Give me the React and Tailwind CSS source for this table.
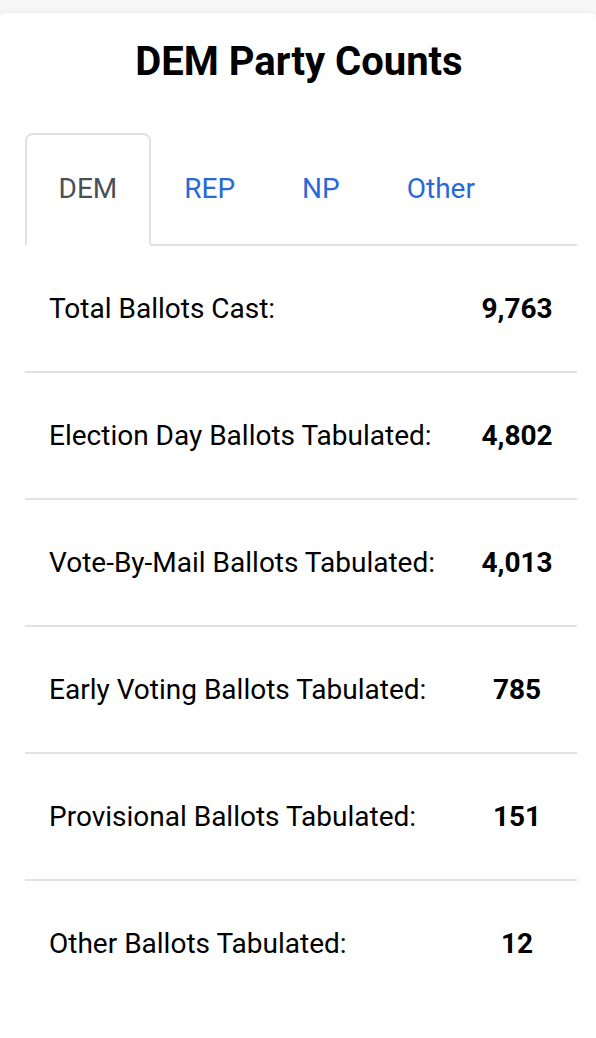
import React from 'react'

const tabs = ['DEM', 'REP', 'NP', 'Other']

const rows = [
  { label: 'Total Ballots Cast:', value: '9,763' },
  { label: 'Election Day Ballots Tabulated:', value: '4,802' },
  { label: 'Vote-By-Mail Ballots Tabulated:', value: '4,013' },
  { label: 'Early Voting Ballots Tabulated:', value: '785' },
  { label: 'Provisional Ballots Tabulated:', value: '151' },
  { label: 'Other Ballots Tabulated:', value: '12' },
]

const App = () => {
  return (
    <div className="min-h-screen bg-[#f7f7f7] pt-[13px] font-['Roboto',sans-serif]">
      <div className="min-h-[1025px] bg-white rounded-t-[6px] shadow-[0_-2px_6px_rgba(0,0,0,0.04)] pt-[25px]">
        <h1 className="text-center text-[40px] leading-[48px] font-bold text-black pl-[2px]">
          DEM Party Counts
        </h1>

        <div className="ml-[25px] mr-[19px] mt-[47px]">
          {/* tabs */}
          <div className="flex border-b-2 border-[#dee2e6]">
            {tabs.map((t, i) => (
              <div
                key={t}
                className={
                  i === 0
                    ? 'px-[31.5px] pt-[33px] pb-[34px] text-[28px] leading-[42px] text-[#495057] bg-white border-2 border-[#dee2e6] border-b-white rounded-t-[8px] -mb-[2px]'
                    : 'px-[31.5px] pt-[33px] pb-[34px] text-[28px] leading-[42px] text-[#2869d9] border-2 border-transparent -mb-[2px]'
                }
              >
                {t}
              </div>
            ))}
          </div>

          {/* counts */}
          <div>
            {rows.map((r, i) => (
              <div
                key={r.label}
                className={
                  'flex items-center text-[28px] leading-[42px] text-black ' +
                  (i < rows.length - 1 ? 'border-b-2 border-[#dee2e6]' : '')
                }
              >
                <div className="flex-1 pl-6 pt-[42px] pb-[41px]">{r.label}</div>
                <div className="w-[120px] text-center font-bold pt-[1px]">{r.value}</div>
              </div>
            ))}
          </div>
        </div>
      </div>
    </div>
  )
}

export default App
